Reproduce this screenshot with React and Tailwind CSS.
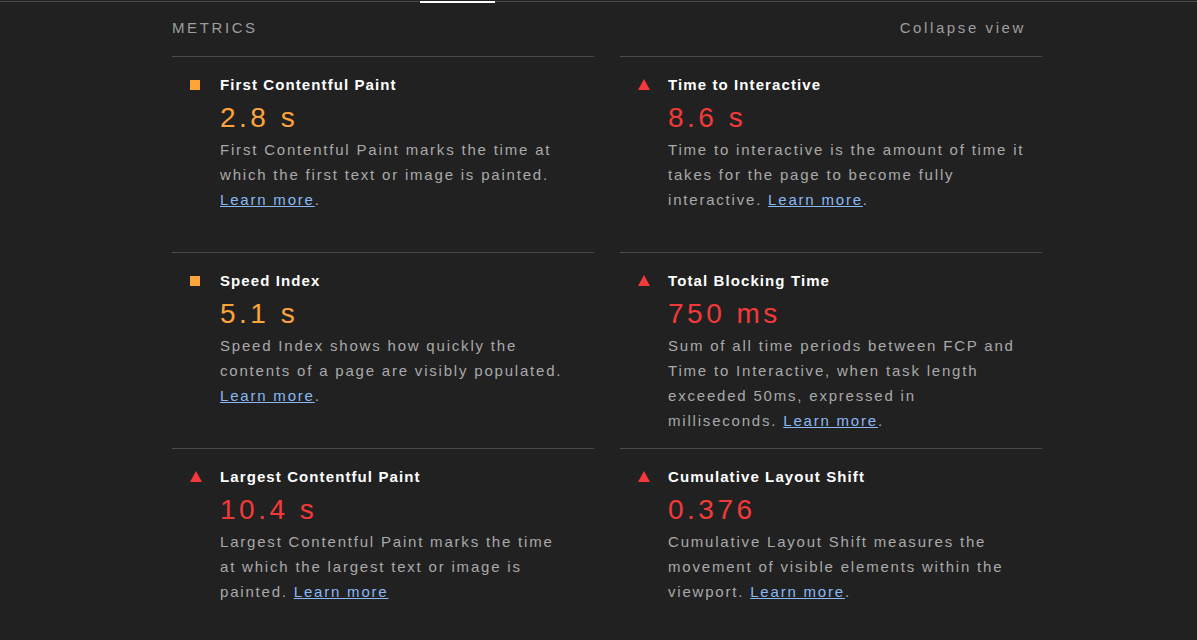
const METRICS = [
  {
    title: 'First Contentful Paint',
    value: '2.8 s',
    status: 'average',
    text: 'First Contentful Paint marks the time at which the first text or image is painted.',
    dot: true,
  },
  {
    title: 'Time to Interactive',
    value: '8.6 s',
    status: 'fail',
    text: 'Time to interactive is the amount of time it takes for the page to become fully interactive.',
    dot: true,
  },
  {
    title: 'Speed Index',
    value: '5.1 s',
    status: 'average',
    text: 'Speed Index shows how quickly the contents of a page are visibly populated.',
    dot: true,
  },
  {
    title: 'Total Blocking Time',
    value: '750 ms',
    status: 'fail',
    text: 'Sum of all time periods between FCP and Time to Interactive, when task length exceeded 50ms, expressed in milliseconds.',
    dot: true,
  },
  {
    title: 'Largest Contentful Paint',
    value: '10.4 s',
    status: 'fail',
    // keep "at which" together so the wrap matches
    text: 'Largest Contentful Paint marks the time at\u00a0which the largest text or image is painted.',
    dot: false,
  },
  {
    title: 'Cumulative Layout Shift',
    value: '0.376',
    status: 'fail',
    text: 'Cumulative Layout Shift measures the movement of visible elements within the viewport.',
    dot: true,
  },
];

function StatusIcon({ status }) {
  if (status === 'average') {
    return <span className="mt-[7px] block h-[10px] w-[10px] bg-[#ffa43a]" />;
  }
  return (
    <svg width="12" height="11" viewBox="0 0 12 11" className="mt-[6px] block">
      <polygon points="6,0 12,11 0,11" fill="#f33a3a" />
    </svg>
  );
}

function Metric({ m }) {
  const valueColor = m.status === 'average' ? 'text-[#ffa43a]' : 'text-[#f33a3a]';
  return (
    <div className="flex h-[196px] border-t border-[#4a4a4a] pt-[16px]">
      <div className="w-[48px] pl-[18px]">
        <StatusIcon status={m.status} />
      </div>
      <div className="w-[358px]">
        <div className="text-[15px] font-bold leading-[24px] tracking-[1.1px] text-white">{m.title}</div>
        <div className={`mt-[2px] text-[28px] leading-[38px] tracking-[3.5px] ${valueColor}`}>{m.value}</div>
        <p className="text-[15px] leading-[25px] tracking-[1.8px] text-[#a9a9a9]">
          {m.text}{' '}
          <a href="#" className="text-[#8ab8f5] underline">Learn more</a>
          {m.dot ? '.' : ''}
        </p>
      </div>
    </div>
  );
}

export default function App() {
  return (
    <div className="min-h-[640px] w-full bg-[#212121] font-['Liberation_Sans',Arial,sans-serif]">
      <div className="relative h-[3px]">
        <div className="absolute left-0 right-0 top-[1px] h-px bg-[#4a4a4a]" />
        <div className="absolute left-[420px] top-[1px] h-[2px] w-[75px] bg-white" />
      </div>
      <div className="ml-[172px] w-[870px]">
        <div className="flex items-center justify-between pb-[18px] pt-[15px] text-[15px] leading-[20px] tracking-[2.6px] text-[#9e9e9e]">
          <span>METRICS</span>
          <span className="pr-[16px]">Collapse view</span>
        </div>
        <div className="grid grid-cols-2 gap-x-[26px]">
          {METRICS.map((m) => (
            <Metric key={m.title} m={m} />
          ))}
        </div>
      </div>
    </div>
  );
}
